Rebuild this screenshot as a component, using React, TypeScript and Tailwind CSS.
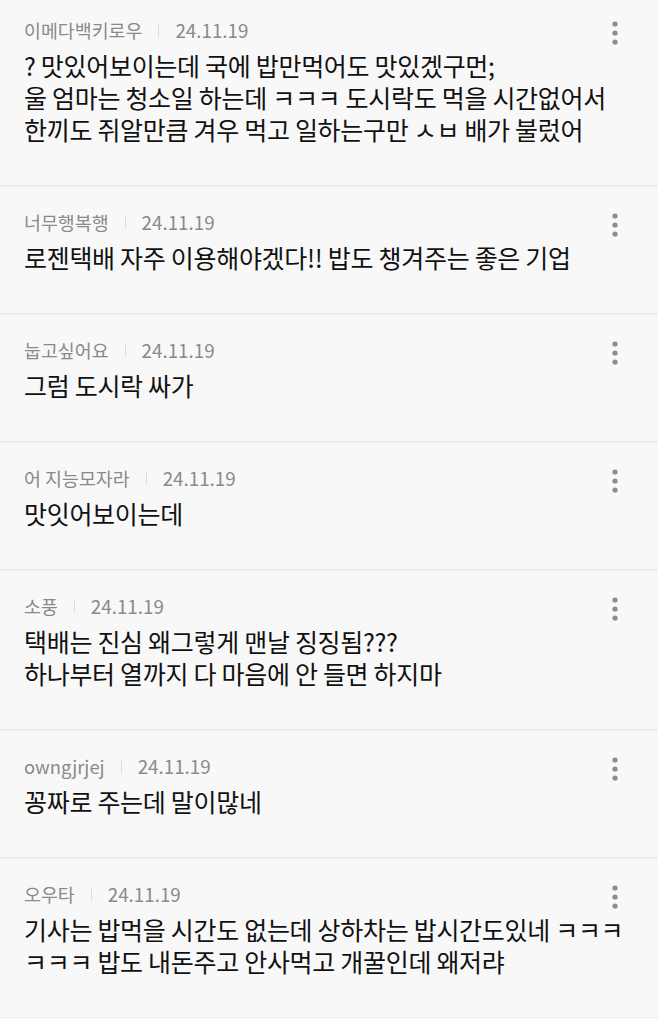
import React from "react";

type C = { name: string; date: string; lines: string[] };

const comments: C[] = [
  {
    name: "이메다백키로우",
    date: "24.11.19",
    lines: [
      "? 맛있어보이는데 국에 밥만먹어도 맛있겠구먼;",
      "울 엄마는 청소일 하는데 ㅋㅋㅋ 도시락도 먹을 시간없어서",
      "한끼도 쥐알만큼 겨우 먹고 일하는구만 ㅅㅂ 배가 불렀어",
    ],
  },
  { name: "너무행복행", date: "24.11.19", lines: ["로젠택배 자주 이용해야겠다!! 밥도 챙겨주는 좋은 기업"] },
  { name: "눕고싶어요", date: "24.11.19", lines: ["그럼 도시락 싸가"] },
  { name: "어 지능모자라", date: "24.11.19", lines: ["맛잇어보이는데"] },
  {
    name: "소풍",
    date: "24.11.19",
    lines: ["택배는 진심 왜그렇게 맨날 징징됨???", "하나부터 열까지 다 마음에 안 들면 하지마"],
  },
  { name: "owngjrjej", date: "24.11.19", lines: ["꽁짜로 주는데 말이많네"] },
  {
    name: "오우타",
    date: "24.11.19",
    lines: ["기사는 밥먹을 시간도 없는데 상하차는 밥시간도있네 ㅋㅋㅋ", "ㅋㅋㅋ 밥도 내돈주고 안사먹고 개꿀인데 왜저랴"],
  },
];

function Dots() {
  return (
    <svg width="8" height="24" viewBox="0 0 8 24" className="shrink-0">
      <circle cx="4" cy="3" r="2.6" fill="#8c8c8c" />
      <circle cx="4" cy="12" r="2.6" fill="#8c8c8c" />
      <circle cx="4" cy="21" r="2.6" fill="#8c8c8c" />
    </svg>
  );
}

function Comment({ c, first }: { c: C; first: boolean }) {
  return (
    <div className={`border-b-2 border-[#ececec] pl-[24px] pr-[39px] pb-[40px] ${first ? "pt-[17px]" : "pt-[22px]"}`}>
      <div className="flex items-center h-[26px]">
        <span className="text-[18.4px] text-[#8a8a8a] leading-[26px]">{c.name}</span>
        <span className="mx-[16px] w-px h-[13px] bg-[#dcdcdc]" />
        <span className="text-[18.8px] text-[#8a8a8a] leading-[26px]">{c.date}</span>
        <div className="ml-auto mt-[6px]">
          <Dots />
        </div>
      </div>
      <div className="mt-[6px] text-[25px] leading-[32px] text-[#111111] tracking-[-0.3px]">
        {c.lines.map((l, i) => (
          <div key={i} className="whitespace-nowrap">
            {l}
          </div>
        ))}
      </div>
    </div>
  );
}

export default function App() {
  return (
    <div
      className="w-[658px] h-[1018px] overflow-hidden bg-[#f8f8f8]"
      style={{ fontFamily: '"Noto Sans CJK KR", "Noto Sans", sans-serif' }}
    >
      {comments.map((c, i) => (
        <Comment key={i} c={c} first={i === 0} />
      ))}
    </div>
  );
}
